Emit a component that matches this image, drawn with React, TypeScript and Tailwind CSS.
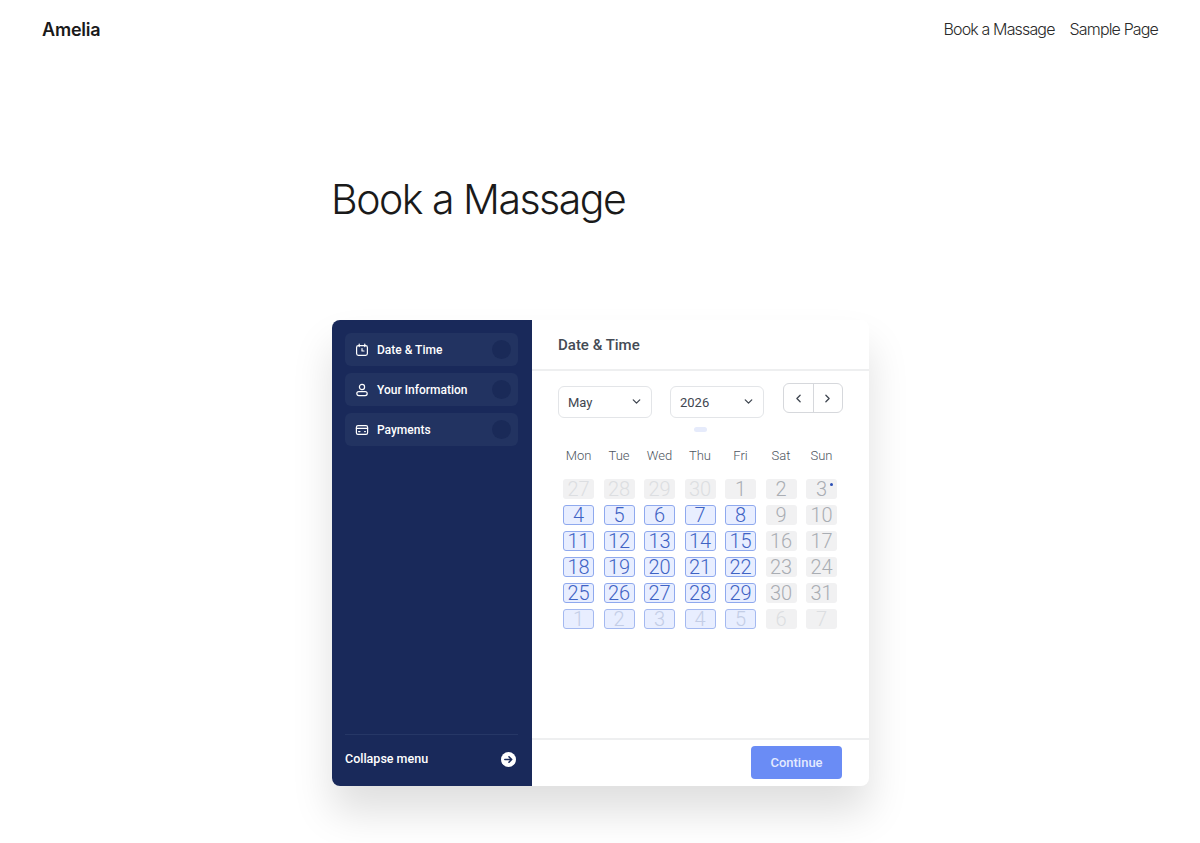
import { ChevronDown, ChevronLeft, ChevronRight } from "lucide-react";

const steps = [
  { label: "Date & Time", icon: "calendar" },
  { label: "Your Information", icon: "user" },
  { label: "Payments", icon: "card" },
];

const weekdays = ["Mon", "Tue", "Wed", "Thu", "Fri", "Sat", "Sun"];

// kind: p = past, o = off, a = available, f = next month available, n = next month off
const days = [
  ["27", "p"], ["28", "p"], ["29", "p"], ["30", "p"], ["1", "o"], ["2", "o"], ["3", "o"],
  ["4", "a"], ["5", "a"], ["6", "a"], ["7", "a"], ["8", "a"], ["9", "o"], ["10", "o"],
  ["11", "a"], ["12", "a"], ["13", "a"], ["14", "a"], ["15", "a"], ["16", "o"], ["17", "o"],
  ["18", "a"], ["19", "a"], ["20", "a"], ["21", "a"], ["22", "a"], ["23", "o"], ["24", "o"],
  ["25", "a"], ["26", "a"], ["27", "a"], ["28", "a"], ["29", "a"], ["30", "o"], ["31", "o"],
  ["1", "f"], ["2", "f"], ["3", "f"], ["4", "f"], ["5", "f"], ["6", "n"], ["7", "n"],
];

const dayStyle: Record<string, string> = {
  p: "bg-[#f1f1f2] text-[#dcdee1]",
  o: "bg-[#f1f1f2] text-[#a9adb3]",
  a: "bg-[#e8eeff] border border-[#8fa9ee] text-[#3f63c4]",
  f: "bg-[#e8eeff] border border-[#a4b9f0] text-[#c3cde6]",
  n: "bg-[#f1f1f2] text-[#dcdee1]",
};

const StepIcon = ({ name }: { name: string }) => {
  if (name === "calendar") {
    return (
      <svg width="14" height="14" viewBox="0 0 14 14" fill="none" stroke="currentColor" strokeWidth="1.2" strokeLinecap="round" strokeLinejoin="round">
        <rect x="1.6" y="2.6" width="10.8" height="9.8" rx="1.8" />
        <path d="M4.2 1v2.6M9.8 1v2.6M7 5.6v2.4h2" />
      </svg>
    );
  }
  if (name === "user") {
    return (
      <svg width="14" height="14" viewBox="0 0 14 14" fill="none" stroke="currentColor" strokeWidth="1.2" strokeLinecap="round" strokeLinejoin="round">
        <circle cx="7" cy="4" r="2.6" />
        <rect x="1.8" y="8.6" width="10.4" height="4" rx="2" />
      </svg>
    );
  }
  return (
    <svg width="14" height="14" viewBox="0 0 14 14" fill="none" stroke="currentColor" strokeWidth="1.2" strokeLinecap="round" strokeLinejoin="round">
      <rect x="1.4" y="2.6" width="11.2" height="8.8" rx="1.6" />
      <path d="M1.4 5.4h11.2M3.6 8.6h1.4M9.6 8.6h0.8" />
    </svg>
  );
};

const Select = ({ value }: { value: string }) => (
  <div className="flex h-[32px] w-[94px] items-center justify-between rounded-md border border-[#e3e5e8] bg-white pl-[9px] pr-[8px] text-[13px] text-[#3f4650]">
    <span className="pt-[1px]">{value}</span>
    <ChevronDown size={13} strokeWidth={2.4} className="mb-[2px] text-[#3f4650]" />
  </div>
);

const App = () => {
  return (
    <div className="h-[843px] w-[1200px] overflow-hidden bg-white font-['Inter',sans-serif]">
      <header className="flex h-[58px] items-center justify-between pl-[42px] pr-[42px]">
        <span className="text-[18px] font-semibold tracking-[-0.2px] text-[#1a1a1a]">Amelia</span>
        <nav className="flex gap-[15px] text-[16px] font-light tracking-[-0.85px] text-[#2a2a2a]">
          <span>Book a Massage</span>
          <span>Sample Page</span>
        </nav>
      </header>

      <div className="ml-[332px] w-[538px]">
        <h1 className="mt-[112px] -ml-px text-[41px] leading-[58px] font-light tracking-[-1.5px] text-[#1a1a1a]">Book a Massage</h1>

        <div className="mt-[92px] flex h-[466px] w-[537px] rounded-lg bg-white font-['Roboto',sans-serif] shadow-[0_26px_40px_rgba(0,0,0,0.13)]">
          <aside className="flex w-[200px] shrink-0 flex-col rounded-l-lg bg-[#19295a] pl-[13px] pr-[14px] pt-[13px]">
            <div className="flex flex-col gap-[7px]">
              {steps.map((step) => (
                <div key={step.label} className="flex h-[33px] items-center rounded-md bg-[#223361] pl-[10px] pr-[7px] text-white">
                  <StepIcon name={step.icon} />
                  <span className="ml-[8px] flex-1 text-[12px] font-medium">{step.label}</span>
                  <span className="size-[19px] rounded-full bg-[#1a2a58]"></span>
                </div>
              ))}
            </div>
            <div className="mt-auto flex h-[52px] items-center justify-between border-t border-[#263766] pr-[2px] pb-[2px] text-white">
              <span className="text-[12.5px] font-medium">Collapse menu</span>
              <span className="flex size-[15px] items-center justify-center rounded-full bg-white">
                <svg width="11" height="11" viewBox="0 0 24 24" fill="none" stroke="#19295a" strokeWidth="3.4" strokeLinecap="round" strokeLinejoin="round">
                  <path d="M4 12h15M13 6l6 6-6 6" />
                </svg>
              </span>
            </div>
          </aside>

          <main className="flex min-w-0 flex-1 flex-col">
            <div className="flex h-[51px] items-center border-b-2 border-[#eeeff0] pl-[26px] pt-[1px] text-[15px] font-medium text-[#444b55]">Date &amp; Time</div>

            <div className="flex-1 pl-[26px]">
              <div className="flex pt-[15px]">
                <div className="flex gap-[18px]">
                  <Select value="May" />
                  <Select value="2026" />
                </div>
                <div className="ml-[19px] -mt-[3px] flex h-[30px] w-[60px] rounded-md border border-[#d6d8dc] text-[#3f4650]">
                  <span className="flex flex-1 items-center justify-center border-r border-[#d6d8dc]">
                    <ChevronLeft size={13} strokeWidth={2.4} />
                  </span>
                  <span className="flex flex-1 items-center justify-center">
                    <ChevronRight size={13} strokeWidth={2.4} />
                  </span>
                </div>
              </div>

              <div className="mt-[9px] ml-[136px] h-[5px] w-[13px] rounded-sm bg-[#e6ebfb]"></div>

              <div className="mt-[16px] grid grid-cols-[repeat(7,31px)] gap-x-[9.5px] pl-[5px]">
                {weekdays.map((d) => (
                  <div key={d} className="text-center text-[13px] leading-[16px] font-light whitespace-nowrap text-[#4d5560]">{d}</div>
                ))}
              </div>

              <div className="mt-[15px] grid grid-cols-[repeat(7,31px)] gap-x-[9.5px] gap-y-[6.4px] pl-[5px]">
                {days.map(([n, kind], i) => (
                  <div key={i} className={`relative flex h-[19.6px] items-center justify-center rounded-[3px] text-[20px] font-light ${dayStyle[kind]}`}>
                    {n}
                    {i === 6 && <span className="absolute top-[4px] right-[4px] size-[3px] rounded-full bg-[#2b4fb5]"></span>}
                  </div>
                ))}
              </div>
            </div>

            <div className="flex h-[48px] justify-end border-t-2 border-[#eeeff0] pt-[6px] pr-[27px]">
              <button className="h-[33px] w-[91px] rounded-[4px] bg-[#6a8cf5] text-[13px] font-medium text-[#e4eaff]">Continue</button>
            </div>
          </main>
        </div>
      </div>
    </div>
  );
};

export default App;
